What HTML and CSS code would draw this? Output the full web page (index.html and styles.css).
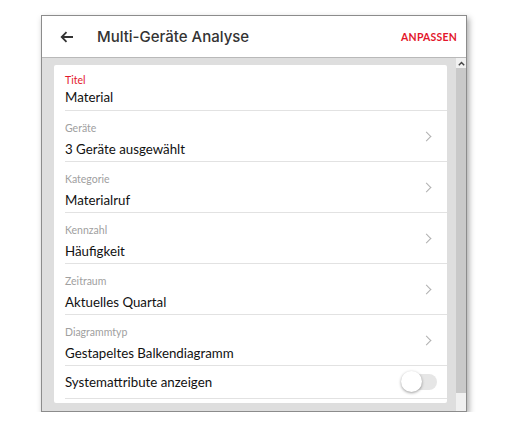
FILE: index.html
```html
<!DOCTYPE html>
<html lang="de">
<head>
    <meta charset="UTF-8">
    <meta name="viewport" content="width=device-width, initial-scale=1.0">
    <title>Multi-Geräte Analyse</title>
    <link rel="stylesheet" href="styles.css">
</head>
<body>

    <div class="window">
        <header class="topbar">
            <button class="back" aria-label="Zurück">
                <svg width="14" height="12" viewBox="0 0 14 12"><path d="M13 6H2M6.5 1.2L1.7 6l4.8 4.8" fill="none" stroke="#333" stroke-width="1.8"/></svg>
            </button>
            <h1>Multi-Geräte Analyse</h1>
            <a class="action" href="#">ANPASSEN</a>
        </header>

        <div class="main">
            <div class="content">
                <div class="card">
                    <div class="row row-first">
                        <div class="label label-active">Titel</div>
                        <div class="value">Material</div>
                    </div>
                    <div class="row">
                        <div class="text">
                            <div class="label">Geräte</div>
                            <div class="value">3 Geräte ausgewählt</div>
                        </div>
                        <span class="chevron"></span>
                    </div>
                    <div class="row">
                        <div class="text">
                            <div class="label">Kategorie</div>
                            <div class="value">Materialruf</div>
                        </div>
                        <span class="chevron"></span>
                    </div>
                    <div class="row">
                        <div class="text">
                            <div class="label">Kennzahl</div>
                            <div class="value">Häufigkeit</div>
                        </div>
                        <span class="chevron"></span>
                    </div>
                    <div class="row">
                        <div class="text">
                            <div class="label">Zeitraum</div>
                            <div class="value">Aktuelles Quartal</div>
                        </div>
                        <span class="chevron"></span>
                    </div>
                    <div class="row">
                        <div class="text">
                            <div class="label">Diagrammtyp</div>
                            <div class="value">Gestapeltes Balkendiagramm</div>
                        </div>
                        <span class="chevron"></span>
                    </div>
                    <div class="row row-switch">
                        <div class="value">Systemattribute anzeigen</div>
                        <span class="switch"><span class="knob"></span></span>
                    </div>
                </div>
            </div>
            <div class="scrollbar">
                <div class="scroll-up">
                    <svg width="7" height="5" viewBox="0 0 7 5"><path d="M0.8 4.2L3.5 1.4l2.7 2.8" fill="none" stroke="#444" stroke-width="1.4"/></svg>
                </div>
                <div class="scroll-thumb"></div>
                <div class="scroll-track"></div>
            </div>
        </div>
    </div>

</body>
</html>
```

FILE: styles.css
```css
body {
    font-family: Lato, "Noto Sans", Arial, sans-serif;
    margin: 0;
    background: #fff;
    color: #222;
}
.window {
    width: 424px;
    height: 395px;
    margin: 15px 0 0 41px;
    border: 1px solid #8c8c8c;
    box-shadow: 2px 3px 6px rgba(0,0,0,0.35);
    display: flex;
    flex-direction: column;
    background: #fff;
}
.topbar {
    height: 41px;
    display: flex;
    align-items: center;
    border-bottom: 1px solid #b9b9b9;
    flex-shrink: 0;
}
.back {
    border: 0;
    background: none;
    padding: 0;
    margin: 1px 0 0 18px;
    width: 14px;
    height: 12px;
    display: flex;
}
.topbar h1 {
    margin: 0 0 0 23px;
    font-family: Inter, Lato, sans-serif;
    font-size: 15px;
    font-weight: 500;
    color: #333;
    flex: 1;
}
.action {
    color: #e3172c;
    font-size: 10.5px;
    font-weight: 700;
    letter-spacing: 0.2px;
    text-decoration: none;
    margin-right: 9px;
}

.main { flex: 1; display: flex; min-height: 0; }
.content {
    flex: 1;
    background: #dedede;
    padding: 7px 9px 8px 12px;
}
.card {
    background: #fff;
    border-radius: 2px;
    padding-bottom: 4px;
}
.row {
    margin-left: 11px;
    display: flex;
    border-bottom: 1px solid #e2e2e2;
    height: 50px;
}
.row-first {
    display: block;
    height: 46px;
    padding-top: 8px;
    box-sizing: border-box;
}
.row-switch { height: 32px; align-items: center; }
.text { flex: 1; padding-top: 10px; }
.label {
    font-size: 10.5px;
    line-height: 14px;
    color: #a0a0a0;
}
.label-active { color: #e3172c; }
.row .text .label { margin-bottom: 4px; }
.value {
    font-size: 13.3px;
    line-height: 20px;
    color: #111;
}
.row-switch .value { flex: 1; }
.chevron {
    align-self: center;
    width: 6px;
    height: 6px;
    border-top: 1.4px solid #b0b0b0;
    border-right: 1.4px solid #b0b0b0;
    transform: rotate(45deg);
    margin-right: 17px;
}
.switch {
    position: relative;
    width: 33px;
    height: 16px;
    border-radius: 8px;
    background: #e6e6e6;
    margin-right: 10px;
}
.knob {
    position: absolute;
    left: -3px;
    top: -3px;
    width: 21px;
    height: 21px;
    border-radius: 50%;
    background: #fff;
    box-shadow: 0 1px 3px rgba(0,0,0,0.4);
}

.scrollbar {
    width: 10px;
    display: flex;
    flex-direction: column;
}
.scroll-up {
    height: 10px;
    background: #f1f1f1;
    display: flex;
    align-items: center;
    justify-content: center;
}
.scroll-thumb { flex: 1; background: #c9c9c9; }
.scroll-track { height: 18px; background: #f0f0f0; }
```
